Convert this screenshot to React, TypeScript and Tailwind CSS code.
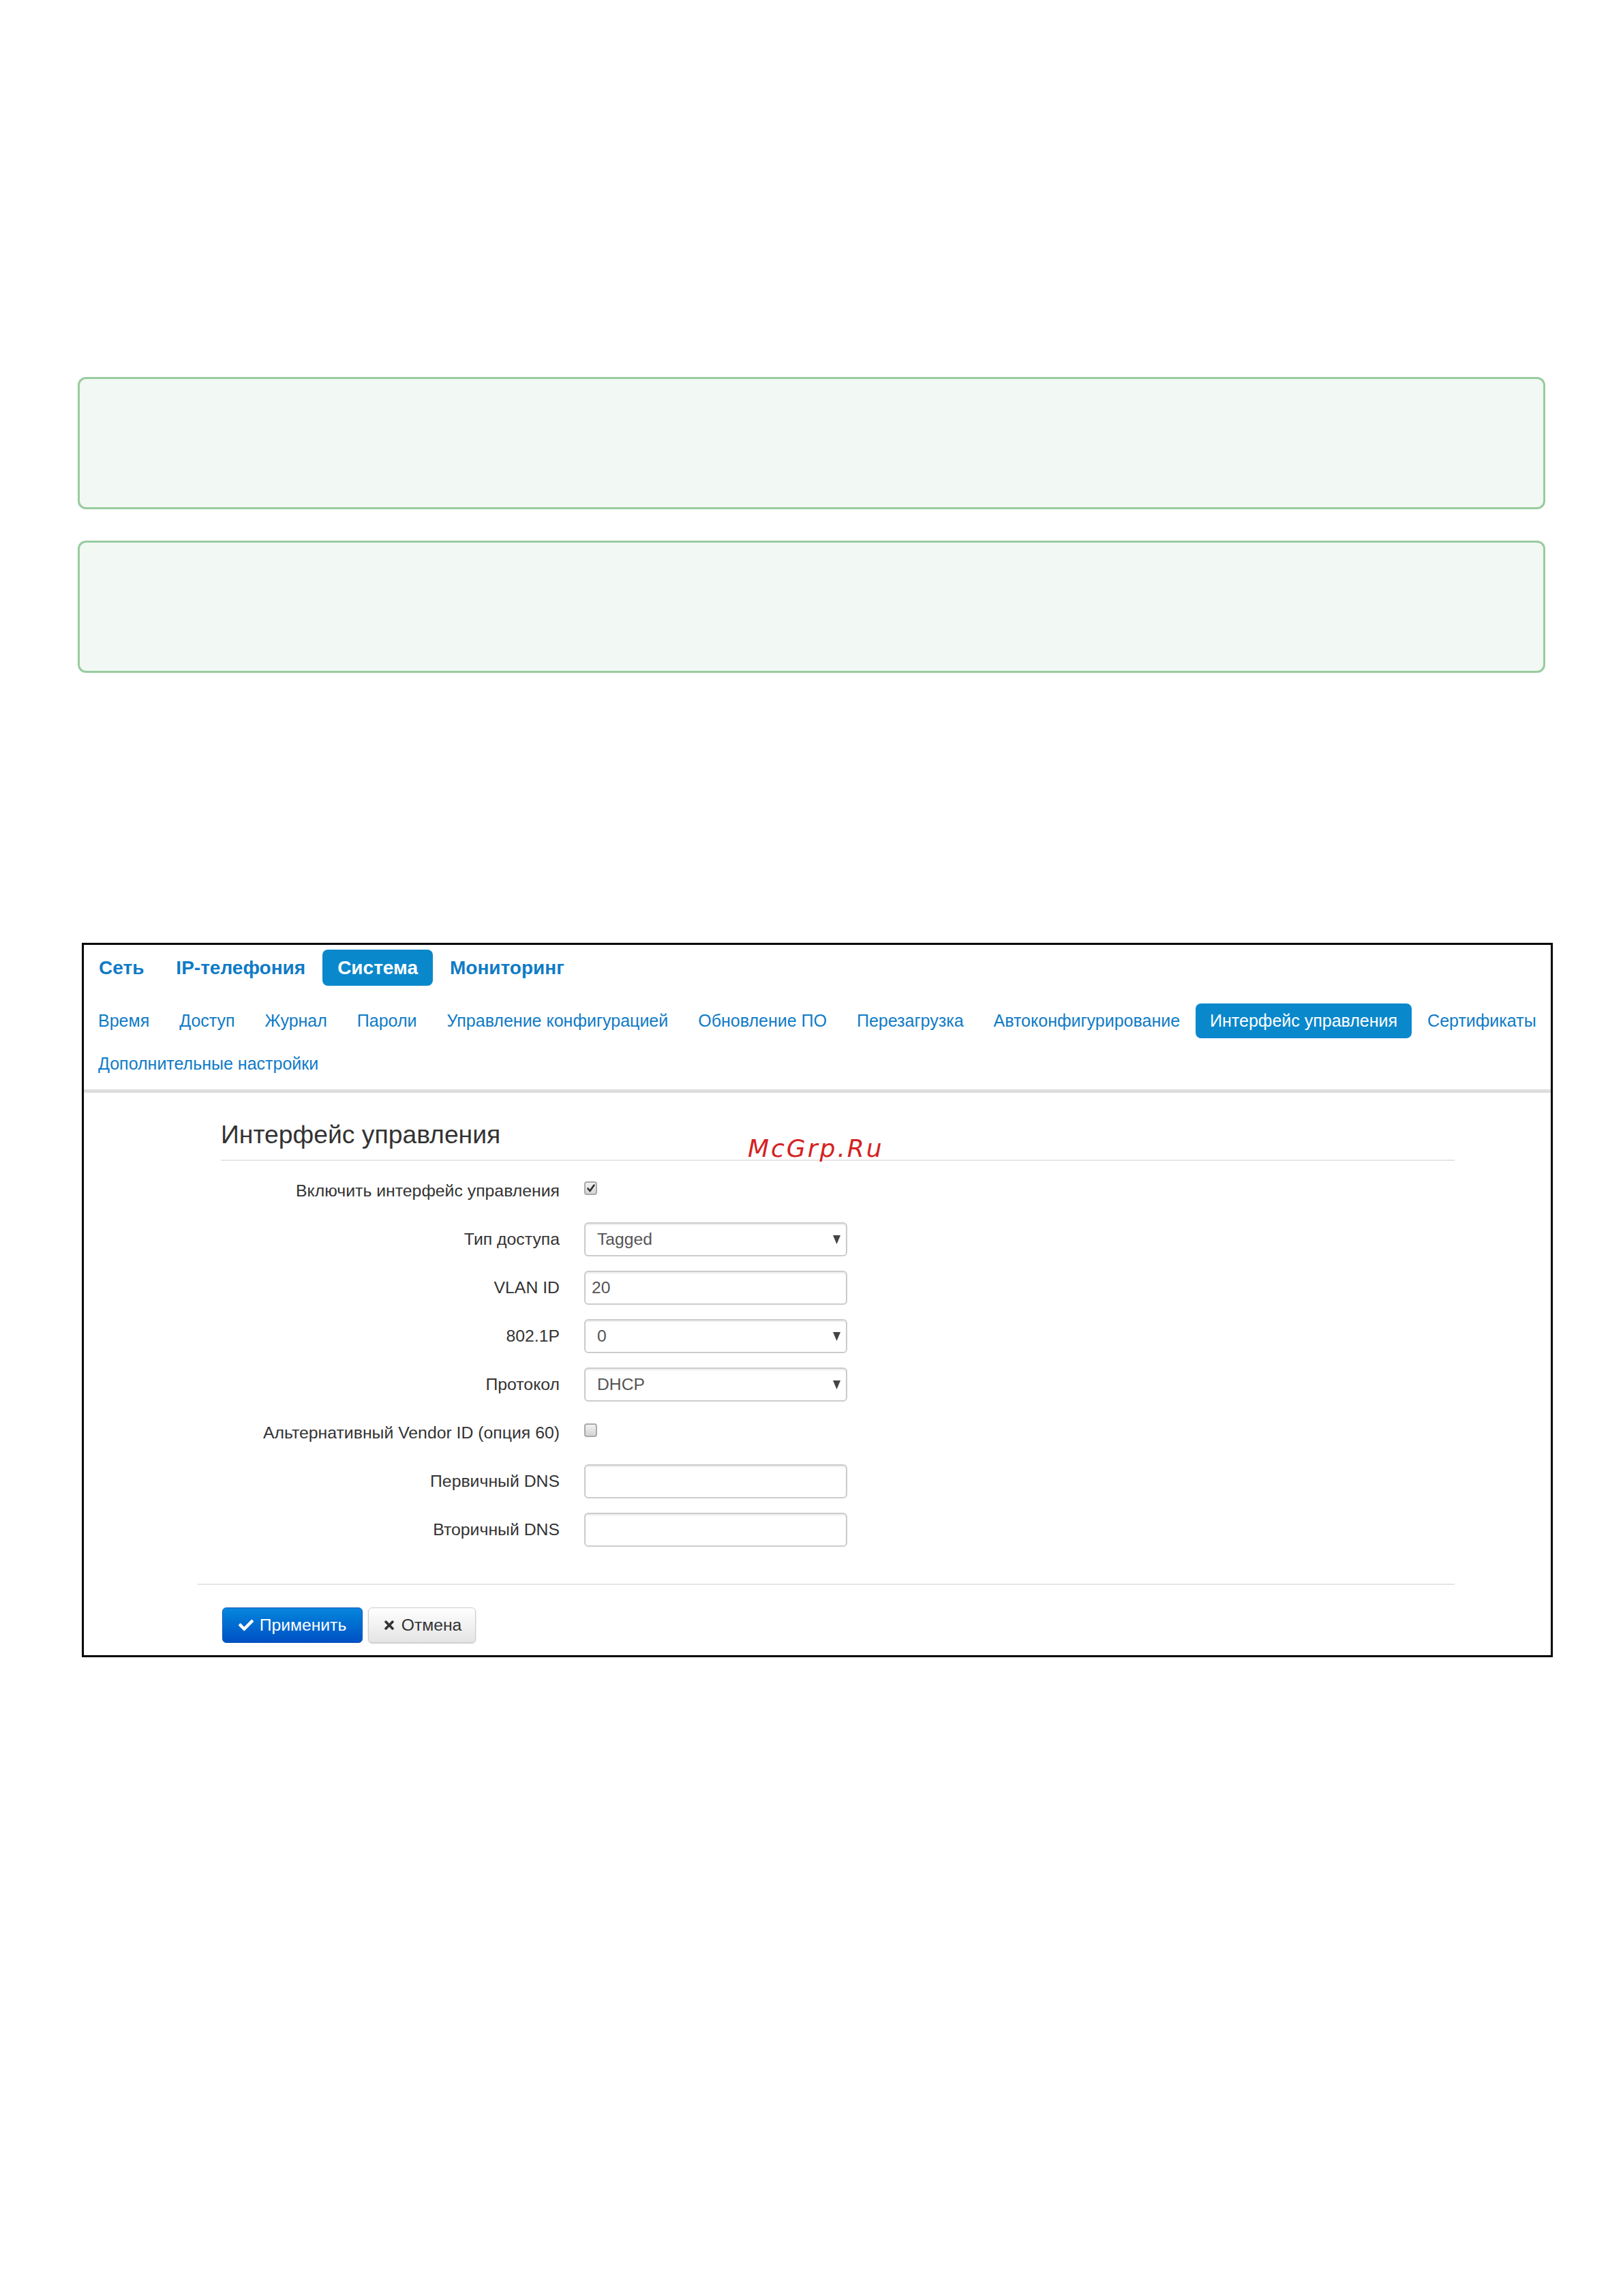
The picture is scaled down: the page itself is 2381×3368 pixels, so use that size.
import { FaCheck, FaTimes } from 'react-icons/fa';

const topNav = [
  { label: 'Сеть' },
  { label: 'IP-телефония' },
  { label: 'Система', active: true },
  { label: 'Мониторинг' },
];

const subNav = [
  { label: 'Время' },
  { label: 'Доступ' },
  { label: 'Журнал' },
  { label: 'Пароли' },
  { label: 'Управление конфигурацией' },
  { label: 'Обновление ПО' },
  { label: 'Перезагрузка' },
  { label: 'Автоконфигурирование' },
  { label: 'Интерфейс управления', active: true },
  { label: 'Сертификаты' },
];

function Checkbox({ checked }: { checked?: boolean }) {
  return (
    <span className="mt-[11px] flex h-[20px] w-[19px] items-center justify-center self-start rounded-[4px] border-2 border-[#a9a9a9] bg-linear-to-b from-[#f2f2f2] to-[#d4d4d4]">
      {checked && (
        <svg width="12" height="12" viewBox="0 0 12 12">
          <path d="M1.5 6.5 L4.5 10 L10.5 1.5" fill="none" stroke="#2f2f2f" strokeWidth="2.6" strokeLinecap="round" strokeLinejoin="round" />
        </svg>
      )}
    </span>
  );
}

function Select({ value }: { value: string }) {
  return (
    <div className="flex h-[50px] w-[386px] items-center justify-between rounded-[6px] border-2 border-[#cccccc] bg-white pl-[17px] pr-[8px] text-[24.7px] text-[#555555] shadow-[inset_0_2px_2px_rgba(0,0,0,0.08)]">
      <span>{value}</span>
      <svg width="11" height="13" viewBox="0 0 11 13">
        <path d="M0 0 H11 L5.5 13 Z" fill="#444444" />
      </svg>
    </div>
  );
}

function TextInput({ value }: { value?: string }) {
  return (
    <div className="flex h-[50px] w-[386px] items-center rounded-[6px] border-2 border-[#cccccc] bg-white pl-[9px] text-[24.7px] text-[#555555] shadow-[inset_0_2px_2px_rgba(0,0,0,0.08)]">
      {value}
    </div>
  );
}

function Row({ label, children }: { label: string; children: React.ReactNode }) {
  return (
    <div className="flex h-[50px] items-center gap-[36px]">
      <div className="w-[497px] text-right text-[24.8px] text-[#333333]">{label}</div>
      {children}
    </div>
  );
}

export default function App() {
  return (
    <div className="relative h-[3368px] w-[2381px] overflow-hidden bg-white pt-[553px] font-['Liberation_Sans',Arial,sans-serif]">
      {/* пустые зелёные блоки */}
      <div className="ml-[114px] h-[194px] w-[2153px] rounded-[12px] border-[3px] border-[#98cc9f] bg-[#f2f8f3]" />
      <div className="ml-[114px] mt-[46px] h-[194px] w-[2153px] rounded-[12px] border-[3px] border-[#98cc9f] bg-[#f2f8f3]" />

      {/* скриншот веб-интерфейса */}
      <div className="ml-[120px] mt-[396px] w-[2158px] border-[3px] border-black bg-white">
        <div className="flex gap-[3px] pt-[7px]">
          {topNav.map((item) => (
            <div
              key={item.label}
              className={
                item.active
                  ? 'flex h-[53px] items-center rounded-[8px] bg-[#0a88cc] px-[22px] text-[28px] font-bold text-white'
                  : 'flex h-[53px] items-center px-[22px] text-[28px] font-bold text-[#0f7bc6]'
              }
            >
              {item.label}
            </div>
          ))}
        </div>

        <div className="mt-[26px] flex gap-[2px]">
          {subNav.map((item) => (
            <div
              key={item.label}
              className={
                item.active
                  ? 'flex h-[51px] items-center whitespace-nowrap rounded-[8px] bg-[#0a88cc] px-[21px] text-[25px] text-white'
                  : 'flex h-[51px] items-center whitespace-nowrap px-[21px] text-[25px] text-[#0f7bc6]'
              }
            >
              {item.label}
            </div>
          ))}
        </div>
        <div className="mt-[12px] flex">
          <div className="flex h-[51px] items-center px-[21px] text-[25px] text-[#0f7bc6]">Дополнительные настройки</div>
        </div>

        <div className="mt-[12px] h-[5px] bg-[#dddddd]" />

        <div className="pb-[18px] pt-[41px]">
          <div className="ml-[201px] w-[1810px]">
            <div className="border-b-2 border-[#e5e5e5] pb-[17px] text-[37.3px] leading-[40px] text-[#333333]">
              Интерфейс управления
            </div>

            <div className="mt-[19px] flex flex-col gap-[21px]">
              <Row label="Включить интерфейс управления">
                <Checkbox checked />
              </Row>
              <Row label="Тип доступа">
                <Select value="Tagged" />
              </Row>
              <Row label="VLAN ID">
                <TextInput value="20" />
              </Row>
              <Row label="802.1P">
                <Select value="0" />
              </Row>
              <Row label="Протокол">
                <Select value="DHCP" />
              </Row>
              <Row label="Альтернативный Vendor ID (опция 60)">
                <Checkbox />
              </Row>
              <Row label="Первичный DNS">
                <TextInput />
              </Row>
              <Row label="Вторичный DNS">
                <TextInput />
              </Row>
            </div>
          </div>

          <div className="ml-[167px] mt-[54px] h-[2px] w-[1844px] bg-[#e5e5e5]" />

          <div className="ml-[203px] mt-[33px] flex gap-[8px]">
            <button className="flex h-[52px] w-[206px] items-center justify-center gap-[9px] rounded-[6px] border border-[#0654b8] bg-linear-to-b from-[#0a86dd] to-[#0050c4] text-[24.7px] text-white">
              <FaCheck size={22} />
              Применить
            </button>
            <button className="flex h-[52px] w-[158px] items-center justify-center gap-[8px] rounded-[6px] border border-[#cccccc] bg-linear-to-b from-white to-[#e4e4e4] text-[24.7px] text-[#333333] shadow-[0_1px_2px_rgba(0,0,0,0.2)]">
              <FaTimes size={20} />
              Отмена
            </button>
          </div>
        </div>
      </div>

      {/* водяной знак */}
      <div className="absolute left-[1097px] top-[1667px] text-[36px] italic leading-none tracking-[3px] text-[#d42222] font-['DejaVu_Sans',sans-serif]">
        McGrp.Ru
      </div>
    </div>
  );
}
